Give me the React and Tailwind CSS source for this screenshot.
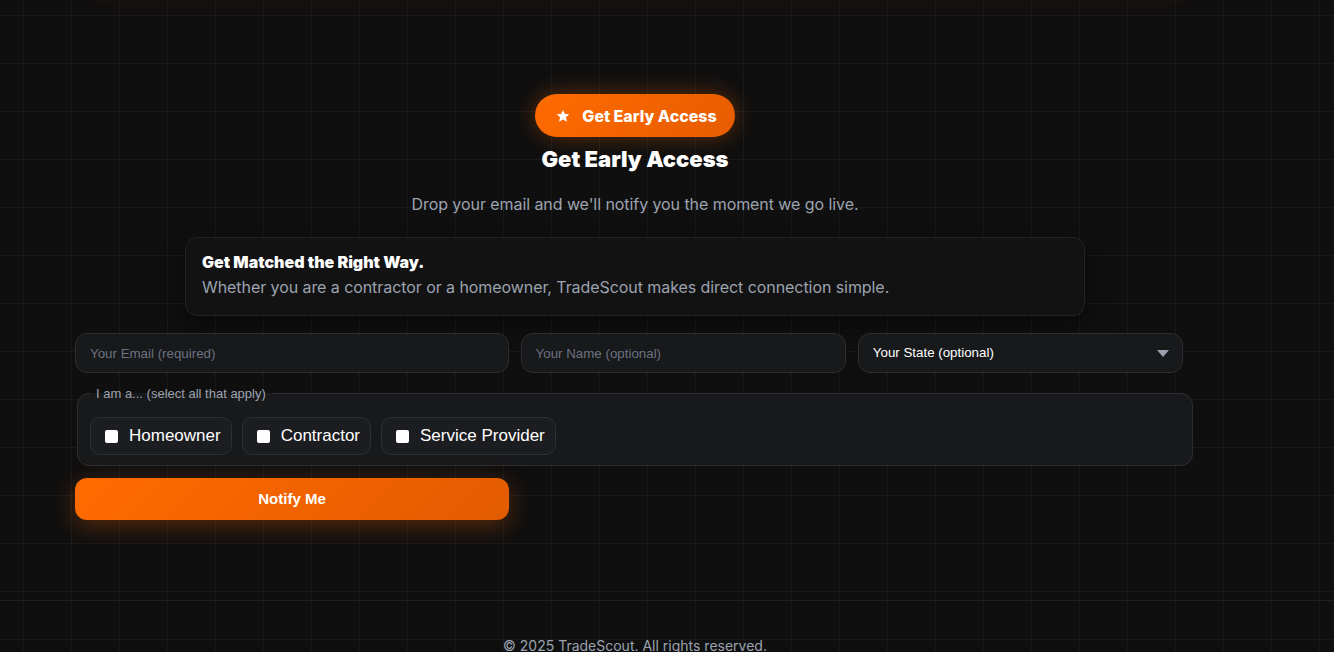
import React, { useState } from "react";

const roles = ["Homeowner", "Contractor", "Service Provider"];

const Star = () => (
  <svg width="14" height="14" viewBox="0 0 24 24" fill="white">
    <path d="M12 1.5l3.2 7 7.6.7-5.8 5.1 1.8 7.5L12 17.9l-6.8 3.9 1.8-7.5-5.8-5.1 7.6-.7z" />
  </svg>
);

export default function App() {
  const [checked, setChecked] = useState({});

  return (
    <div className="relative min-h-screen overflow-hidden bg-[#0f0f0f] bg-[linear-gradient(to_right,rgba(255,255,255,0.045)_1px,transparent_1px),linear-gradient(to_bottom,rgba(255,255,255,0.045)_1px,transparent_1px)] bg-[length:48px_48px] bg-[position:23px_15px] font-['Inter',sans-serif]">
      {/* glow from the block above the fold */}
      <div className="absolute left-[90px] top-[-60px] h-[60px] w-[1100px] rounded-2xl bg-[#110f0e] shadow-[0_0_26px_rgba(255,107,0,0.07)]" />

      <section className="pt-[94px]">
        <div className="ml-[75px] w-[1120px]">
          <div className="flex flex-col items-center">
            <div className="flex h-[43px] items-center gap-3 rounded-full bg-[linear-gradient(135deg,#ff6b00,#e65c00)] pl-[21px] pr-[18px] text-[16px] font-extrabold text-white shadow-[0_0_22px_rgba(255,107,0,0.35)]">
              <Star />
              <span>Get Early Access</span>
            </div>
            <h2 className="mt-2 text-[22px] leading-[28px] font-black text-white">Get Early Access</h2>
            <p className="mt-[19px] text-[16px] leading-6 tracking-[-0.07px] text-[#9ca3af]">
              Drop your email and we'll notify you the moment we go live.
            </p>
            <div className="mt-[21px] w-[900px] rounded-xl border border-[#232323] bg-[#121212] px-4 pt-3 pb-4 shadow-[0_8px_24px_rgba(0,0,0,0.4)]">
              <div className="text-[16px] leading-6 font-black text-white">Get Matched the Right Way.</div>
              <div className="mt-px text-[16px] leading-6 tracking-[-0.07px] text-[#9ca3af]">
                Whether you are a contractor or a homeowner, TradeScout makes direct connection simple.
              </div>
            </div>
          </div>

          <form className="mt-[17px] font-['Liberation_Sans',Arial,sans-serif]" onSubmit={(e) => e.preventDefault()}>
            <div className="grid w-[1108px] grid-cols-[4fr_3fr_3fr] gap-3">
              <input
                type="email"
                placeholder="Your Email (required)"
                className="h-10 rounded-xl border border-[#2c2d30] bg-[#18191b] px-3.5 text-[13.33px] text-white placeholder:text-[#6b7280] outline-none"
              />
              <input
                type="text"
                placeholder="Your Name (optional)"
                className="h-10 rounded-xl border border-[#2c2d30] bg-[#18191b] px-3.5 text-[13.33px] text-white placeholder:text-[#6b7280] outline-none"
              />
              <div className="relative">
                <select className="h-10 w-full appearance-none rounded-xl border border-[#2c2d30] bg-[#18191b] px-3.5 text-[13.33px] text-white outline-none">
                  <option>Your State (optional)</option>
                </select>
                <svg className="pointer-events-none absolute right-[14px] top-[17px]" width="12" height="7" viewBox="0 0 12 7">
                  <path d="M0 0h12L6 7z" fill="#9ca3af" />
                </svg>
              </div>
            </div>

            <fieldset className="mx-[2px] mt-[13px] w-[1116px] rounded-xl border border-[#2c2d30] bg-[#18191b] px-3 pt-4 pb-2.5">
              <legend className="px-1.5 text-[13px] leading-[15px] text-[#9ca3af]">I am a... (select all that apply)</legend>
              <div className="flex gap-2.5">
                {roles.map((r) => (
                  <label
                    key={r}
                    className="flex cursor-pointer items-center gap-2 rounded-[10px] border border-[#2f3033] bg-[#1c1d20] py-2 pl-2.5 pr-2.5 text-[17px] leading-5 text-white"
                  >
                    <input
                      type="checkbox"
                      checked={!!checked[r]}
                      onChange={() => setChecked({ ...checked, [r]: !checked[r] })}
                      className="m-[3px] ml-1 h-[13px] w-[13px] appearance-none rounded-[2px] bg-white"
                    />
                    {r}
                  </label>
                ))}
              </div>
            </fieldset>

            <button
              type="submit"
              className="mt-3 h-[42px] w-[434px] rounded-xl bg-[linear-gradient(135deg,#ff6b00,#e35b00)] text-[15px] font-bold text-white shadow-[0_6px_24px_rgba(255,107,0,0.3)]"
            >
              Notify Me
            </button>
          </form>
        </div>
      </section>

      <footer className="mt-[80px] border-t border-[#1f1f1f] pt-[35px] pb-8">
        <div className="ml-[75px] w-[1120px] text-center text-[14px] leading-5 text-[#9ca3af]">
          © 2025 TradeScout. All rights reserved.
        </div>
      </footer>
    </div>
  );
}
